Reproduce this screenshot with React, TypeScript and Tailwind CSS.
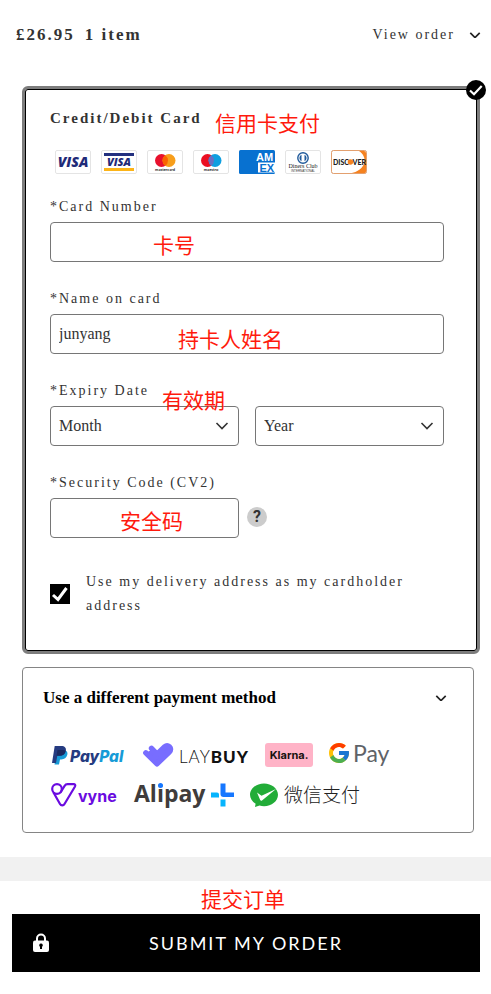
import { useState } from "react";
import type { ReactNode } from "react";
import { FcGoogle } from "react-icons/fc";

function Chevron({ className = "" }: { className?: string }) {
  return (
    <svg viewBox="0 0 14 8" className={className} fill="none" stroke="#222" strokeWidth="2" aria-hidden="true">
      <path d="M1.500 1l5.500 5.500L12.500 1" />
    </svg>
  );
}

function SelectChevron() {
  return (
    <svg
      viewBox="0 0 14 8"
      className="pointer-events-none absolute top-4 right-2.5 h-2 w-3.5"
      fill="none"
      stroke="#333"
      strokeWidth="1.600"
      aria-hidden="true"
    >
      <path d="M1.500 1L7 6.500L12.500 1" />
    </svg>
  );
}

function Note({ children, className = "" }: { children: ReactNode; className?: string }) {
  return (
    <span
      lang="zh"
      className={`pointer-events-none whitespace-nowrap font-['Liberation_Sans','Noto_Sans_CJK_SC',sans-serif] text-[21px] leading-6 font-normal tracking-normal text-[#ff1a0d] ${className}`}
    >
      {children}
    </span>
  );
}

const fieldBox = "h-10 w-full rounded-[4px] border border-[#767676] bg-white px-2 text-base text-[#333] outline-none";
const labelText = "mb-[3px] block pt-px text-sm leading-6 tracking-[2px]";

function CardFrame({ label, children }: { label: string; children: ReactNode }) {
  return (
    <li>
      <svg viewBox="0 0 36 24" className="h-6 w-9" role="img" aria-label={label}>
        <rect x=".5" y=".5" width="35" height="23" rx="1.500" fill="#fff" stroke="#e4e4e4" />
        {children}
      </svg>
    </li>
  );
}

function CardBrands() {
  return (
    <ul className="mt-5 flex gap-2.5 pl-[5px]">
      <CardFrame label="Visa">
        <text x="18" y="17" textAnchor="middle" fontFamily="Open Sans" fontWeight="800" fontStyle="italic" fontSize="14" fill="#1f2a78">VISA</text>
      </CardFrame>
      <CardFrame label="Visa Debit">
        <path d="M3 3h30v3H3z" fill="#23307f" />
        <path d="M3 18h30v3H3z" fill="#fcb418" />
        <text x="18" y="16" textAnchor="middle" fontFamily="Open Sans" fontWeight="800" fontStyle="italic" fontSize="11" fill="#1f2a78">VISA</text>
      </CardFrame>
      <CardFrame label="Mastercard">
        <circle cx="14.500" cy="10.500" r="6.500" fill="#e8112d" />
        <circle cx="22" cy="10.500" r="6.500" fill="#f79e1b" />
        <path d="M18.250 5.200a6.500 6.500 0 0 1 0 10.600a6.500 6.500 0 0 1 0-10.600z" fill="#fa6400" />
        <text x="18" y="20.500" textAnchor="middle" fontFamily="Lato" fontWeight="700" fontSize="4" fill="#222">mastercard</text>
      </CardFrame>
      <CardFrame label="Maestro">
        <circle cx="14.500" cy="10.500" r="6.500" fill="#eb0f22" />
        <circle cx="22" cy="10.500" r="6.500" fill="#0f9fe0" />
        <path d="M18.250 5.200a6.500 6.500 0 0 1 0 10.600a6.500 6.500 0 0 1 0-10.600z" fill="#6a6fc2" />
        <text x="18" y="20.500" textAnchor="middle" fontFamily="Lato" fontWeight="700" fontSize="4" fill="#222">maestro</text>
      </CardFrame>
      <CardFrame label="American Express">
        <rect width="36" height="24" rx="1.500" fill="#0871d0" />
        <text x="17" y="10.500" fontFamily="Liberation Sans" fontWeight="700" fontSize="11" fill="#fff">AM</text>
        <path d="M19 12.500h17v10H19z" fill="#fff" />
        <text x="20.500" y="22" fontFamily="Liberation Sans" fontWeight="700" fontSize="11" fill="#0871d0">EX</text>
      </CardFrame>
      <CardFrame label="Diners Club">
        <circle cx="18" cy="8" r="5.200" fill="#fff" stroke="#205a9b" strokeWidth="1.400" />
        <path d="M16.500 4.800v6.400a3.500 3.500 0 0 1 0-6.400zM19.500 4.800v6.400a3.500 3.500 0 0 0 0-6.400z" fill="#205a9b" />
        <text x="18" y="18" textAnchor="middle" fontFamily="Liberation Serif" fontSize="6" fill="#222">Diners Club</text>
        <text x="18" y="22" textAnchor="middle" fontFamily="Liberation Sans" fontSize="3" fill="#333">INTERNATIONAL</text>
      </CardFrame>
      <CardFrame label="Discover">
        <path d="M28 1h5q2 0 2 2v18.500q0 2-2 2H19c8-1.500 13-5.500 14.500-11c.8-4.500-1.500-9-5.500-11.500z" fill="#f58220" />
        <rect x=".5" y=".5" width="35" height="23" rx="2" fill="none" stroke="#e3a06f" />
        <text x="2" y="14.500" fontFamily="Lato" fontWeight="900" fontSize="7" fill="#222">DISC</text>
        <circle cx="19.400" cy="12" r="2.700" fill="#f58220" />
        <text x="21.500" y="14.500" fontFamily="Lato" fontWeight="900" fontSize="7" fill="#222">VER</text>
      </CardFrame>
    </ul>
  );
}

function PaymentLogos() {
  return (
    <div className="mt-[33px] flex flex-col gap-4 pl-2">
      <div className="flex h-6 gap-4">
        <svg viewBox="0 0 76 24" className="h-6 w-[76px] overflow-visible" role="img" aria-label="PayPal">
          <path d="M6 7h6c3.500 0 5 2 4.300 4.800c-.8 3.200-3 4.600-6 4.600H9L8 21.500H3.500z" fill="#179bd7" />
          <path d="M3.700 3h6.500c3.600 0 5.300 2 4.600 5c-.8 3.300-3 4.800-6.200 4.800H6.300L5 20H1z" fill="#253b80" />
          <path d="M6.500 7h5.200c1.200 0 2.200.2 3 .7c-.6 3.500-2.900 5.100-6.100 5.100H5.500z" fill="#1b2a60" />
          <text x="19" y="18.500" fontFamily="Inter" fontWeight="800" fontStyle="italic" fontSize="15.500" fill="#253b80">
            Pay<tspan fill="#179bd7">Pal</tspan>
          </text>
        </svg>
        <svg viewBox="0 0 106 24" className="h-6 w-[106px] overflow-visible" role="img" aria-label="Laybuy">
          <path d="M3 10L14 20.500L26.500 8.500c1.500-1.500 1.500-3.500.2-4.800c-1.400-1.300-3.400-1.200-4.700 0L14 11.500L9 6.500" fill="#786dff" />
          <path d="M2.800 9.800L14 20.800L26.300 9c1.800-1.800 1.500-4.200.2-5.300c-1.600-1.300-3.600-1-4.800.1L14 11.200L8.500 5.300" fill="none" stroke="#786dff" strokeWidth="5.400" strokeLinecap="round" strokeLinejoin="round" />
          <text x="36" y="20" fontFamily="Lato" fontWeight="300" fontSize="17" letterSpacing="1" fill="#111">
            LAY<tspan fontWeight="900">BUY</tspan>
          </text>
        </svg>
        <svg viewBox="0 0 48 24" className="h-6 w-12" role="img" aria-label="Klarna">
          <rect width="48" height="24" rx="3" fill="#ffb3c7" />
          <text x="24" y="16" textAnchor="middle" fontFamily="Inter" fontWeight="700" fontSize="11" fill="#17120f">Klarna.</text>
        </svg>
        <div className="flex h-6 w-[60px] items-start" role="img" aria-label="Google Pay">
          <FcGoogle className="-mt-0.5 -ml-0.5 h-6 w-6 shrink-0" />
          <svg viewBox="0 0 38 24" className="h-6 w-[38px] shrink-0 overflow-visible">
            <text x="2" y="19" fontFamily="Lato" fontSize="23" fill="#5f6368">Pay</text>
          </svg>
        </div>
      </div>
      <div className="flex h-6 gap-4">
        <svg viewBox="0 0 67 24" className="h-6 w-[67px] overflow-visible" role="img" aria-label="Vyne">
          <g fill="none" stroke="#6a0be0" strokeWidth="2.200" strokeLinejoin="round">
            <circle cx="6" cy="6" r="4.800" />
            <path d="M2.500 9.500l6.500 11.500c1 1.800 3.500 1.800 4.500 0L24 3.500c.7-1.300 0-2.300-1.300-2.300h-6.200c-1.400 0-2.200.6-2.900 1.700L9.500 9.500" />
          </g>
          <text x="27" y="19" fontFamily="Inter" fontWeight="700" fontSize="16" fill="#6a0be0">vyne</text>
        </svg>
        <svg viewBox="0 0 100 24" className="h-6 w-[100px] overflow-visible" role="img" aria-label="Alipay+">
          <text x="0" y="19" fontFamily="Open Sans" fontWeight="700" fontSize="23" fill="#403c3b">Alipay</text>
          <circle cx="26.500" cy="2.500" r="2.500" fill="#1677ff" />
          <path d="M86.500.5h5v9h8.500v4.500H89.500q-3 0-3-3z" fill="#1677ff" />
          <path d="M77 9.500h6q2 0 2 2v3h-8zM86.500 16.500h5v7h-5z" fill="#06b4fd" />
        </svg>
        <svg viewBox="0 0 110 24" className="h-6 w-[110px] overflow-visible" role="img" aria-label="微信支付">
          <path d="M14 .5c7.700 0 14 5 14 11.300s-6.300 11.400-14 11.400c-1.500 0-3-.2-4.500-.6L5 24l.6-3.300C2.200 18.600 0 15.400 0 11.800C0 5.500 6.300.5 14 .5z" fill="#22ac38" />
          <path d="M7 9.500l4.500 3.200L26 6L12 17.500q-1.200.8-1.800-.5z" fill="#fff" />
          <text x="34" y="18.500" fontFamily="Noto Sans CJK SC" fontWeight="300" fontSize="19" fill="#222">微信支付</text>
        </svg>
      </div>
    </div>
  );
}

export default function App() {
  const [name, setName] = useState("junyang");
  const [sameAddress, setSameAddress] = useState(true);

  return (
    <main className="bg-white font-['Liberation_Serif','Noto_Sans_CJK_SC',serif] text-[#333]">
      <header className="flex items-center justify-between pt-[23px] pr-[10px] pl-4">
        <p className="flex gap-2.5 text-[17px] leading-6 font-bold tracking-[2px]">
          <span>£26.95</span>
          <span>1 item</span>
        </p>
        <button type="button" className="flex items-center gap-3.5 text-sm leading-6 tracking-[2px]">
          View order
          <Chevron className="w-3" />
        </button>
      </header>

      <form onSubmit={(event) => event.preventDefault()}>
        <div className="pt-[39px] pr-[11px] pl-[22px]">
          <section className="relative rounded-md border-[3px] border-[#7d7d7d] shadow-[inset_0_0_0_1px_#000] px-[25px] pt-[17px] pb-[33px]">
            <svg viewBox="0 0 20 20" className="absolute -top-[9px] -right-[9px] h-5 w-5" aria-hidden="true">
              <circle cx="10" cy="10" r="10" fill="#000" />
              <path d="M4 10.500l4 3.700L15.700 6" fill="none" stroke="#fff" strokeWidth="2.200" />
            </svg>

            <div className="pr-2">
              <h2 className="relative w-fit text-[15px] leading-6 font-bold tracking-[2px]">
                Credit/Debit Card
                <Note className="absolute top-1.5 left-[165px]">信用卡支付</Note>
              </h2>
              <CardBrands />

              <div className="relative mt-5">
                <label htmlFor="number" className={labelText}>*Card Number</label>
                <input id="number" className={fieldBox} />
                <Note className="absolute bottom-1 left-[103px]">卡号</Note>
              </div>

              <div className="relative mt-6">
                <label htmlFor="name" className={labelText}>*Name on card</label>
                <input id="name" className={fieldBox} value={name} onChange={(event) => setName(event.target.value)} />
                <Note className="absolute bottom-0.5 left-32">持卡人姓名</Note>
              </div>

              <div className="relative mt-6">
                <label htmlFor="month" className={labelText}>*Expiry Date</label>
                <div className="grid grid-cols-2 gap-4">
                  <div className="relative">
                    <select id="month" className={`${fieldBox} appearance-none`}>
                      <option>Month</option>
                    </select>
                    <SelectChevron />
                  </div>
                  <div className="relative">
                    <select aria-label="Year" className={`${fieldBox} appearance-none`}>
                      <option>Year</option>
                    </select>
                    <SelectChevron />
                  </div>
                </div>
                <Note className="absolute top-[11px] left-28">有效期</Note>
              </div>

              <div className="mt-6">
                <label htmlFor="code" className={labelText}>*Security Code (CV2)</label>
                <div className="grid grid-cols-2 gap-4">
                  <div className="relative">
                    <input id="code" className={fieldBox} />
                    <Note className="absolute bottom-1 left-[70px]">安全码</Note>
                  </div>
                  <button
                    type="button"
                    aria-label="Security code help"
                    className="-ml-2 mt-[9px] h-5 w-5 rounded-full bg-[#ccc] font-['Roboto',sans-serif] text-base leading-5 font-bold"
                  >
                    ?
                  </button>
                </div>
              </div>

              <label className="mt-8 flex items-center gap-4 text-sm leading-6 tracking-[2px]">
                <span className="relative h-5 w-5 shrink-0">
                  <input
                    type="checkbox"
                    checked={sameAddress}
                    onChange={(event) => setSameAddress(event.target.checked)}
                    className="block h-5 w-5 appearance-none border border-black bg-white checked:bg-black"
                  />
                  <svg viewBox="0 0 20 20" className="pointer-events-none absolute inset-0" aria-hidden="true">
                    <path d="M3 11l5 4.500L16.500 4" fill="none" stroke="#fff" strokeWidth="3" />
                  </svg>
                </span>
                Use my delivery address as my cardholder address
              </label>
            </div>
          </section>

          <section className="mt-[13px] mr-1.5 rounded-[4px] border border-[#858585] pt-[18px] pb-[25px] pl-5">
            <button type="button" className="flex w-full items-center justify-between pr-[26px] text-[17px] leading-6 font-bold text-black">
              Use a different payment method
              <Chevron className="w-3" />
            </button>
            <PaymentLogos />
          </section>
        </div>

        <div className="mt-6 h-6 bg-[#f1f1f1]" />

        <div className="pr-[11px] pb-[22px] pl-3">
          <Note className="block pt-[7px] pr-1.5 pb-0.5 text-center">提交订单</Note>
          <button
            type="submit"
            className="relative block h-[58px] w-full bg-black font-['Lato',sans-serif] text-lg tracking-[2px] text-white"
          >
            <svg viewBox="0 0 16 20" className="absolute top-[19px] left-[21px] h-5 w-4" aria-hidden="true">
              <path d="M4 9V5.500a4 4 0 0 1 8 0V9" fill="none" stroke="#fff" strokeWidth="2" />
              <rect y="7.500" width="16" height="11.500" rx="2" fill="#fff" />
              <path d="M8 10.500a1.800 1.800 0 0 1 1 3.300V16H7v-2.200a1.800 1.800 0 0 1 1-3.300z" fill="#000" />
            </svg>
            SUBMIT MY ORDER
          </button>
        </div>
      </form>
    </main>
  );
}
